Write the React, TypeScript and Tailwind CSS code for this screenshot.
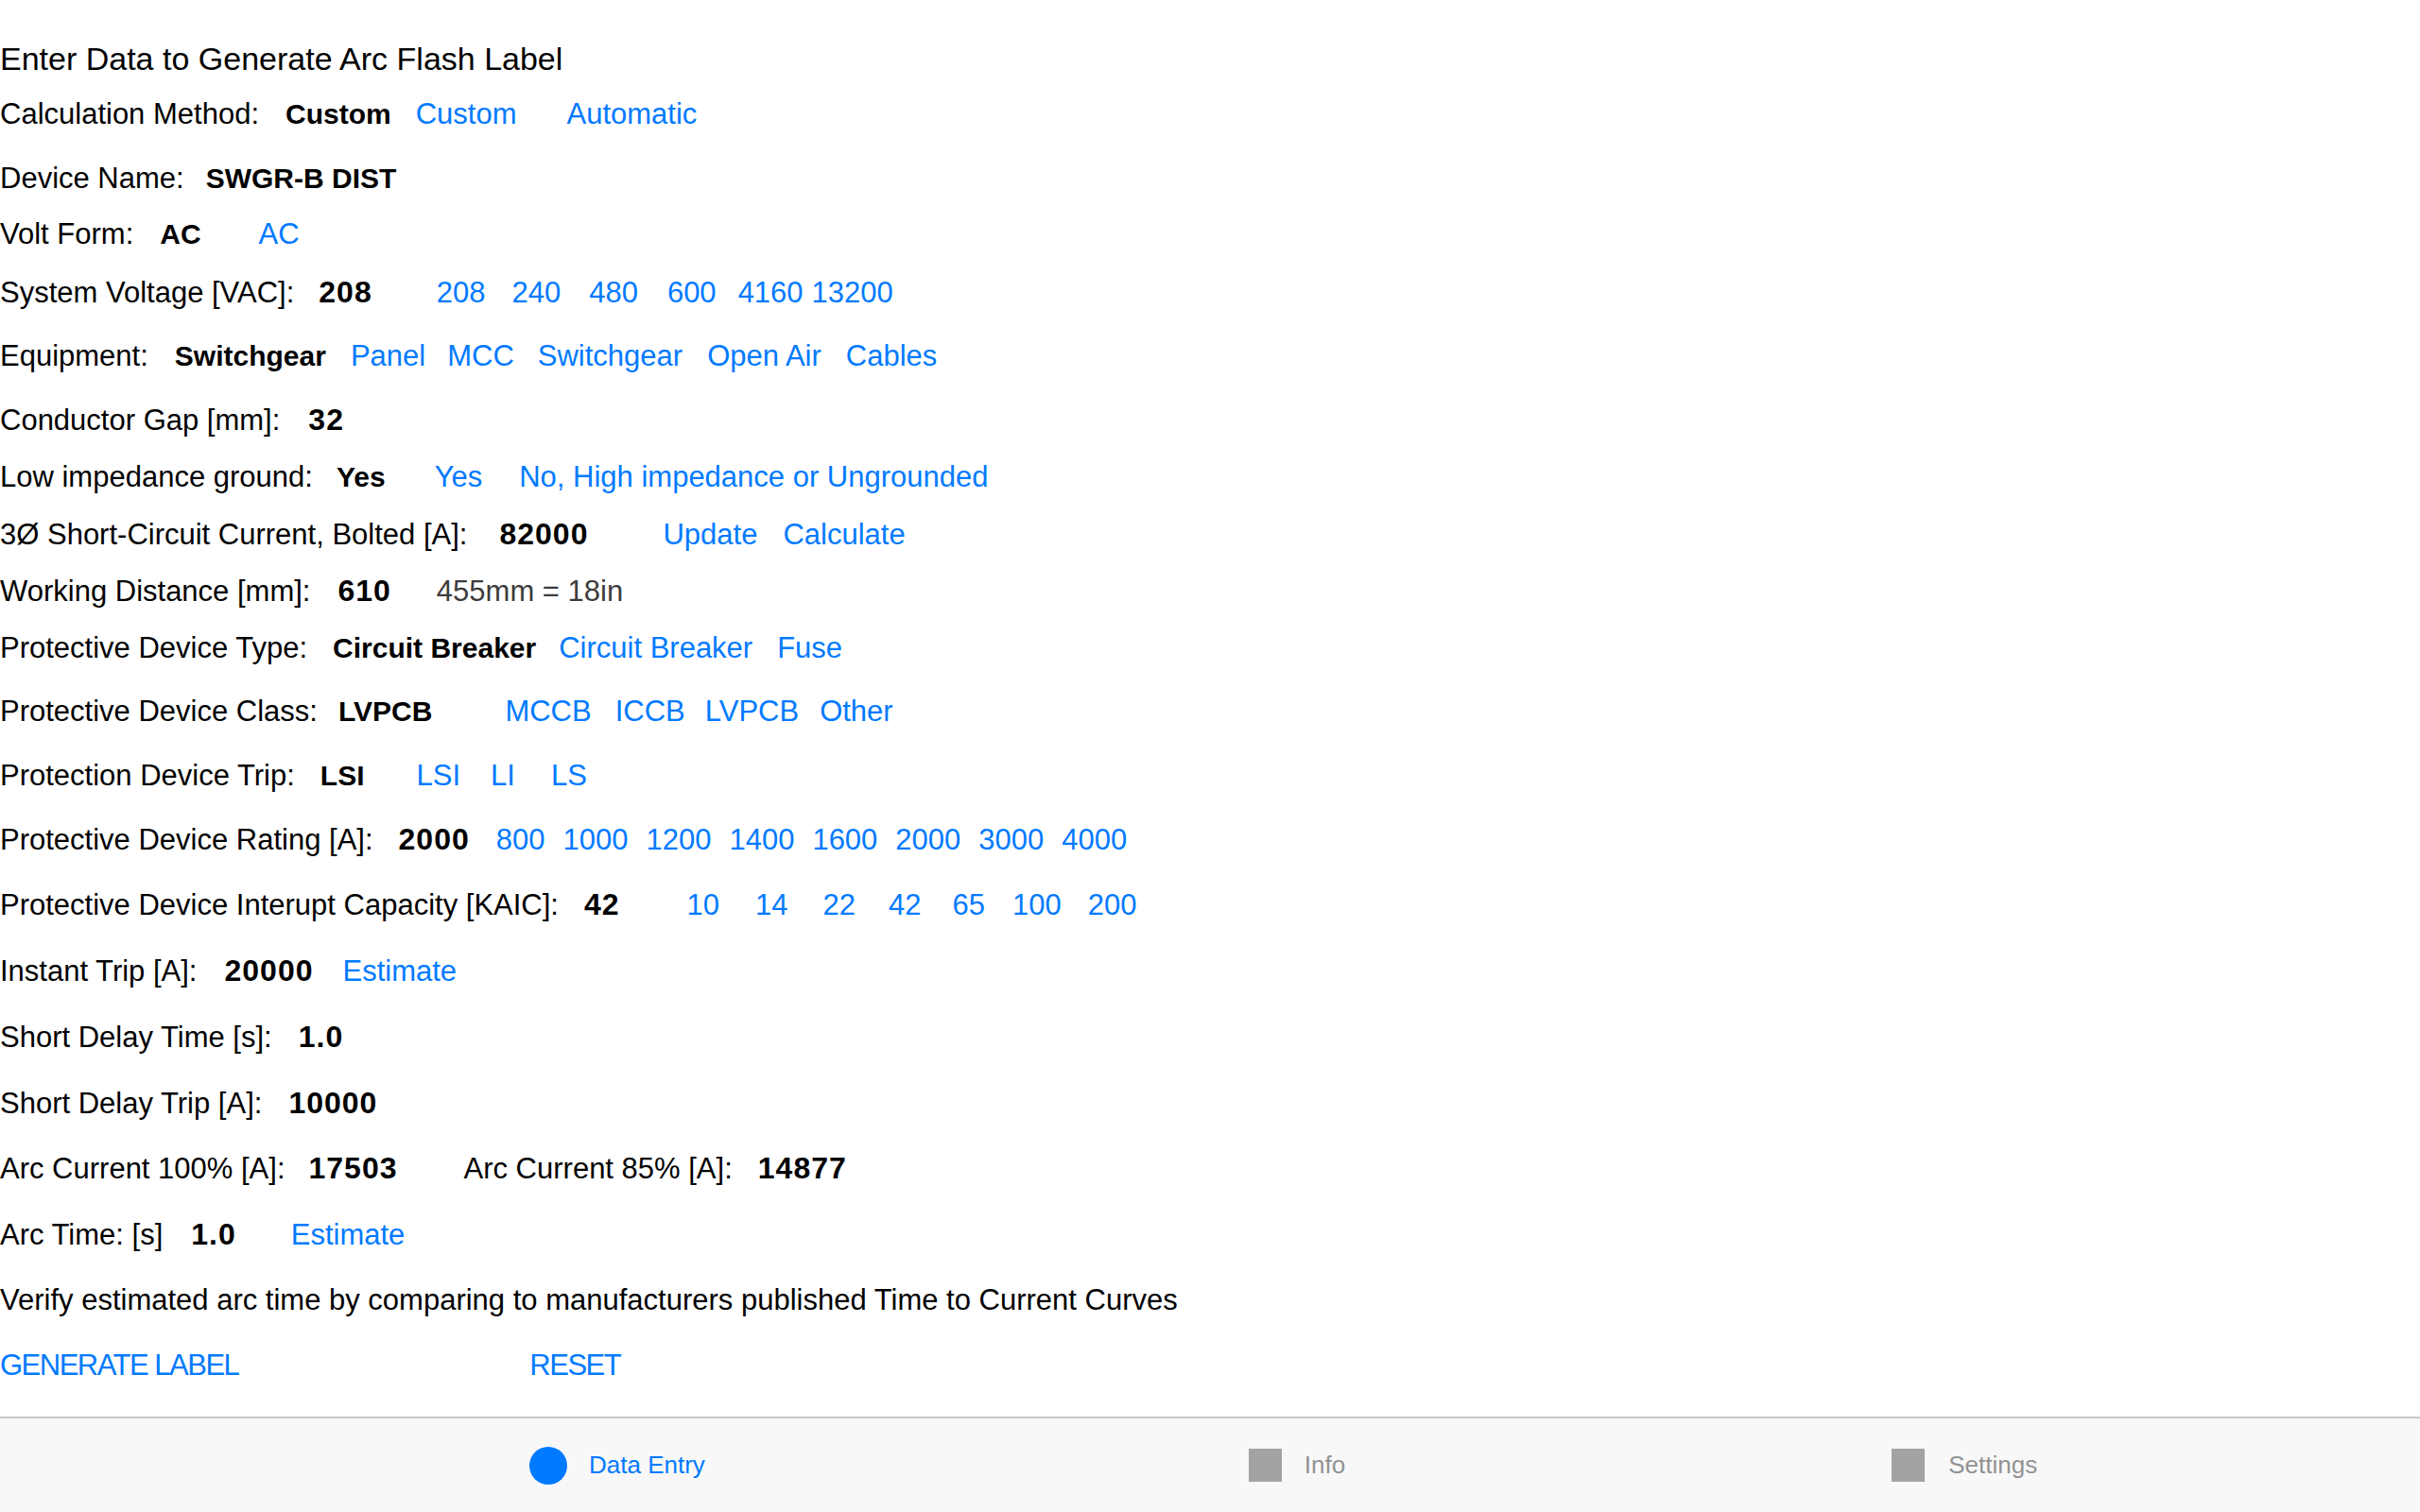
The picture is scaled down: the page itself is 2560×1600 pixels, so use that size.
import type { ReactNode } from "react";
import clsx from "clsx";

function Row({ className, children }: { className?: string; children: ReactNode }) {
  return (
    <div className={clsx("flex items-baseline h-10 leading-10 whitespace-nowrap", className)}>
      {children}
    </div>
  );
}

// bold letters are set a touch smaller, bold digits a touch larger (the original font has wide bold figures)
function Value({ className, num, children }: { className?: string; num?: boolean; children: ReactNode }) {
  return (
    <span className={clsx("font-bold", num ? "text-[32px] tracking-[1px]" : "text-[30px]", className ?? "ml-[28px]")}>
      {children}
    </span>
  );
}

function Opt({ className, children }: { className?: string; children: ReactNode }) {
  return (
    <button type="button" className={clsx("text-[#007aff] cursor-pointer", className)}>
      {children}
    </button>
  );
}

export default function App() {
  return (
    <div className="h-screen flex flex-col bg-white text-black font-['Liberation_Sans',Arial,sans-serif] text-[31px]">
      <main className="flex-1 pt-[42px]">
        <Row className="text-[34px]">Enter Data to Generate Arc Flash Label</Row>

        <Row className="mt-[19px]">
          <span>Calculation Method:</span>
          <Value className="ml-[28px]">Custom</Value>
          <Opt className="ml-[26px]">Custom</Opt>
          <Opt className="ml-[53px]">Automatic</Opt>
        </Row>

        <Row className="mt-[28px]">
          <span>Device Name:</span>
          <Value className="ml-[23px]">SWGR-B DIST</Value>
        </Row>

        <Row className="mt-[19px]">
          <span>Volt Form:</span>
          <Value>AC</Value>
          <Opt className="ml-[61px]">AC</Opt>
        </Row>

        <Row className="mt-[21px]">
          <span>System Voltage [VAC]:</span>
          <Value num className="ml-[26px]">208</Value>
          <Opt className="ml-[68px]">208</Opt>
          <Opt className="ml-[28px]">240</Opt>
          <Opt className="ml-[30px]">480</Opt>
          <Opt className="ml-[31px]">600</Opt>
          <Opt className="ml-[23px]">4160</Opt>
          <Opt className="ml-[9px]">13200</Opt>
        </Row>

        <Row className="mt-[28px]">
          <span>Equipment:</span>
          <Value>Switchgear</Value>
          <Opt className="ml-[26px]">Panel</Opt>
          <Opt className="ml-[23px]">MCC</Opt>
          <Opt className="ml-[25px]">Switchgear</Opt>
          <Opt className="ml-[26px]">Open Air</Opt>
          <Opt className="ml-[26px]">Cables</Opt>
        </Row>

        <Row className="mt-[27px]">
          <span>Conductor Gap [mm]:</span>
          <Value num className="ml-[30px]">32</Value>
        </Row>

        <Row className="mt-[21px]">
          <span>Low impedance ground:</span>
          <Value className="ml-[25px]">Yes</Value>
          <Opt className="ml-[52px]">Yes</Opt>
          <Opt className="ml-[39px]">No, High impedance or Ungrounded</Opt>
        </Row>

        <Row className="mt-[20px]">
          <span>3Ø Short-Circuit Current, Bolted [A]:</span>
          <Value num className="ml-[34px]">82000</Value>
          <Opt className="ml-[79px]">Update</Opt>
          <Opt className="ml-[27px]">Calculate</Opt>
        </Row>

        <Row className="mt-[20px]">
          <span>Working Distance [mm]:</span>
          <Value num className="ml-[29px]">610</Value>
          <span className="ml-[48px] text-[#3c3c3c]">455mm = 18in</span>
        </Row>

        <Row className="mt-[21px]">
          <span>Protective Device Type:</span>
          <Value className="ml-[27px]">Circuit Breaker</Value>
          <Opt className="ml-[24px]">Circuit Breaker</Opt>
          <Opt className="ml-[26px]">Fuse</Opt>
        </Row>

        <Row className="mt-[27px]">
          <span>Protective Device Class:</span>
          <Value className="ml-[22px]">LVPCB</Value>
          <Opt className="ml-[77px]">MCCB</Opt>
          <Opt className="ml-[25px]">ICCB</Opt>
          <Opt className="ml-[21px]">LVPCB</Opt>
          <Opt className="ml-[22px]">Other</Opt>
        </Row>

        <Row className="mt-[28px]">
          <span>Protection Device Trip:</span>
          <Value className="ml-[27px]">LSI</Value>
          <Opt className="ml-[55px]">LSI</Opt>
          <Opt className="ml-[32px]">LI</Opt>
          <Opt className="ml-[38px]">LS</Opt>
        </Row>

        <Row className="mt-[27px]">
          <span>Protective Device Rating [A]:</span>
          <Value num className="ml-[27px]">2000</Value>
          <Opt className="ml-[28px]">800</Opt>
          <Opt className="ml-[19px]">1000</Opt>
          <Opt className="ml-[19px]">1200</Opt>
          <Opt className="ml-[19px]">1400</Opt>
          <Opt className="ml-[19px]">1600</Opt>
          <Opt className="ml-[19px]">2000</Opt>
          <Opt className="ml-[19px]">3000</Opt>
          <Opt className="ml-[19px]">4000</Opt>
        </Row>

        <Row className="mt-[29px]">
          <span>Protective Device Interupt Capacity [KAIC]:</span>
          <Value num className="ml-[27px]">42</Value>
          <Opt className="ml-[71px]">10</Opt>
          <Opt className="ml-[38px]">14</Opt>
          <Opt className="ml-[37px]">22</Opt>
          <Opt className="ml-[35px]">42</Opt>
          <Opt className="ml-[33px]">65</Opt>
          <Opt className="ml-[29px]">100</Opt>
          <Opt className="ml-[28px]">200</Opt>
        </Row>

        <Row className="mt-[30px]">
          <span>Instant Trip [A]:</span>
          <Value num className="ml-[29px]">20000</Value>
          <Opt className="ml-[31px]">Estimate</Opt>
        </Row>

        <Row className="mt-[30px]">
          <span>Short Delay Time [s]:</span>
          <Value num>1.0</Value>
        </Row>

        <Row className="mt-[30px]">
          <span>Short Delay Trip [A]:</span>
          <Value num>10000</Value>
        </Row>

        <Row className="mt-[29px]">
          <span>Arc Current 100% [A]:</span>
          <Value num className="ml-[25px]">17503</Value>
          <span className="ml-[70px]">Arc Current 85% [A]:</span>
          <Value num className="ml-[27px]">14877</Value>
        </Row>

        <Row className="mt-[30px]">
          <span>Arc Time: [s]</span>
          <Value num className="ml-[30px]">1.0</Value>
          <Opt className="ml-[58px]">Estimate</Opt>
        </Row>

        <Row className="mt-[30px]">
          Verify estimated arc time by comparing to manufacturers published Time to Current Curves
        </Row>

        <Row className="mt-[29px] tracking-[-1.5px]">
          <Opt>GENERATE LABEL</Opt>
          <Opt className="ml-[308px]">RESET</Opt>
        </Row>
      </main>

      <nav className="h-[101px] shrink-0 border-t-2 border-[#c8c8c8] bg-[#f8f8f8] flex items-center pl-[560px] text-[26px]">
        <div className="flex items-center text-[#007aff]">
          <span className="w-10 h-10 rounded-full bg-[#007aff]" />
          <span className="ml-[23px]">Data Entry</span>
        </div>
        <div className="flex items-center ml-[575px] text-[#929292]">
          <span className="w-[35px] h-[35px] bg-[#a3a3a3]" />
          <span className="ml-[24px]">Info</span>
        </div>
        <div className="flex items-center ml-[578px] text-[#929292]">
          <span className="w-[35px] h-[35px] bg-[#a3a3a3]" />
          <span className="ml-[25px]">Settings</span>
        </div>
      </nav>
    </div>
  );
}
